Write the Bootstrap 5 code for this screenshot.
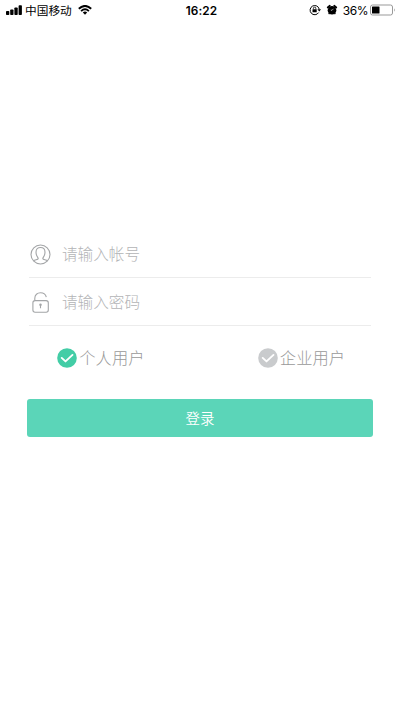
<!DOCTYPE html>
<html lang="zh-CN">
<head>
<meta charset="utf-8">
<meta name="viewport" content="width=device-width, initial-scale=1">
<title>登录</title>
<link href="https://cdn.jsdelivr.net/npm/bootstrap@5.3.0/dist/css/bootstrap.min.css" rel="stylesheet">
<style>
body{font-family:Inter,"Noto Sans CJK SC",sans-serif;background:#fff;min-height:710px}
svg{display:block;flex:none}
.status-bar{height:20px;padding:0 4px 0 6px;color:#000;font-size:12px;line-height:20px}
.status-bar .side{flex:1 1 0}
.carrier{font-size:11.7px;margin-left:3px;margin-right:6px;padding-top:1px}
.clock{font-weight:600;font-size:11.8px;letter-spacing:.1px;padding:1px 0 0 1px}
.battery-level{font-size:12px;letter-spacing:-.45px;margin-left:5px;padding-top:1px}
.login-form{padding:210px 27px 0}
.field-row{height:48px;margin:0 2px;border-bottom:1px solid #ececec;padding:1px 0 0 1px}
.field-row .form-control{font-family:"Noto Sans CJK SC",sans-serif;font-weight:300;font-size:15.6px;line-height:22px;color:#777;margin:-2px 0 0 11px}
.field-row .form-control::placeholder{color:#b3b4b6;opacity:1}
.role-row{height:72px;padding:0 28px 8px 30px}
.role{font-family:"Noto Sans CJK SC",sans-serif;font-weight:300;font-size:16.3px;line-height:24px;color:#999;gap:3px;cursor:pointer}
.role span{margin-top:-2px;margin-left:-.7px}
.btn-login{--bs-btn-bg:#5bd5b8;--bs-btn-color:#fff;--bs-btn-hover-bg:#4bc9ab;--bs-btn-hover-color:#fff;--bs-btn-border-width:0;--bs-btn-border-radius:3px;height:38px;margin-top:.5px;font-family:"Noto Sans CJK SC",sans-serif;font-size:14.5px;font-weight:350;line-height:22px}
</style>
</head>
<body>
<header class="status-bar d-flex align-items-center">
  <div class="side d-flex align-items-center">
    <svg width="16" height="10" viewBox="0 0 16 10"><rect y="6" width="3.3" height="4" rx=".8"/><rect x="4.2" y="4.5" width="3.3" height="5.5" rx=".8"/><rect x="8.4" y="2.5" width="3.3" height="7.5" rx=".8"/><rect x="12.6" y=".3" width="3.3" height="9.7" rx=".8"/></svg>
    <span class="carrier">中国移动</span>
    <svg width="14" height="10" viewBox="0 0 14 10" fill="none" stroke="#000" stroke-width="1.9"><path d="M.8 3.7Q7-1.9 13.2 3.7M3.1 6.1Q7 2.6 10.9 6.1"/><path d="M4.8 7.5Q7 5.7 9.2 7.5L7 9.8Z" fill="#000" stroke="none"/></svg>
  </div>
  <span class="clock">16:22</span>
  <div class="side d-flex align-items-center justify-content-end">
    <svg width="12" height="12" viewBox="0 0 12 12" fill="none" stroke="#000"><path d="M9.6 8.6A4.6 4.6 0 1 1 10.2 5.1" stroke-width="1"/><path d="M8.4 5.2H12L10.3 7.6Z" fill="#000" stroke="none"/><rect x="3.5" y="5.2" width="4.2" height="3.1" rx=".4" fill="#000" stroke="none"/><path d="M4.4 5.3V4.3a1.2 1.2 0 0 1 2.4 0v1" stroke-width=".8"/></svg>
    <svg width="12" height="12" viewBox="0 0 12 12" style="margin-left:5px"><circle cx="6" cy="6.3" r="4.3"/><path d="M1.7 3.5 3.8 1.7M8.2 1.7l2.1 1.8" stroke="#000" stroke-width="1.7" stroke-linecap="round"/><path d="m3.4 9.2-.7 1M8.6 9.2l.7 1" stroke="#000" stroke-width="1.3"/><path d="M7.4 4.8 6 6.4 4.8 6" fill="none" stroke="#fff" stroke-width=".6"/></svg>
    <span class="battery-level">36%</span>
    <svg width="26" height="12" viewBox="0 0 26 12" style="margin-left:2px"><rect x=".5" y="1" width="22" height="10" rx="2" fill="#fff" stroke="#999"/><rect x="2" y="2.5" width="7.5" height="7" rx=".5"/><path d="M24 4.2q1.7 1.8 0 3.6Z" fill="#999"/></svg>
  </div>
</header>
<main>
<form class="login-form">
  <label class="field-row d-flex align-items-center">
    <svg width="21" height="21" viewBox="0 0 21 21" fill="none" stroke="#a3a5a7" stroke-width="1.1"><circle cx="10.5" cy="10.5" r="9.5"/><path d="M3.5 16.7C5 15.5 8 15.8 8.2 14.6 8.4 13.4 6 12.2 6 8.2 6 5 7.8 3.5 10.5 3.5S15 5 15 8.2C15 12.2 12.6 13.4 12.8 14.6 13 15.8 16 15.5 17.5 16.7"/></svg>
    <input class="form-control border-0 p-0 shadow-none" type="text" placeholder="请输入帐号">
  </label>
  <label class="field-row d-flex align-items-center">
    <svg width="21" height="21" viewBox="0 0 21 21" fill="none" stroke="#a3a5a7" stroke-width="1.1"><rect x="2.9" y="8.6" width="15.4" height="11.6" rx="2.2"/><path d="M4.8 8.5V6.2C4.8 2.8 7.3.8 10.5.8c3 0 5.2 1.6 5.8 4.4M10.5 12.4v3.8"/><circle cx="10.5" cy="12.8" r=".7" fill="#a3a5a7"/></svg>
    <input class="form-control border-0 p-0 shadow-none" type="password" placeholder="请输入密码">
  </label>
  <div class="role-row d-flex align-items-center justify-content-between">
    <div class="role d-flex align-items-center"><svg width="20" height="20" viewBox="0 0 20 20"><circle cx="10" cy="10" r="9.8" fill="#43cda6"/><path d="m4.7 9.9 3.8 3.5 7-6.5" fill="none" stroke="#fff" stroke-width="1.9" stroke-linecap="round" stroke-linejoin="round"/></svg><span>个人用户</span></div>
    <div class="role d-flex align-items-center"><svg width="20" height="20" viewBox="0 0 20 20"><circle cx="10" cy="10" r="9.8" fill="#c9cbcd"/><path d="m4.7 9.9 3.8 3.5 7-6.5" fill="none" stroke="#fff" stroke-width="1.9" stroke-linecap="round" stroke-linejoin="round"/></svg><span>企业用户</span></div>
  </div>
  <button class="btn btn-login w-100 py-0" type="button">登录</button>
</form>
</main>
<script src="https://cdn.jsdelivr.net/npm/bootstrap@5.3.0/dist/js/bootstrap.bundle.min.js"></script>
</body>
</html>
